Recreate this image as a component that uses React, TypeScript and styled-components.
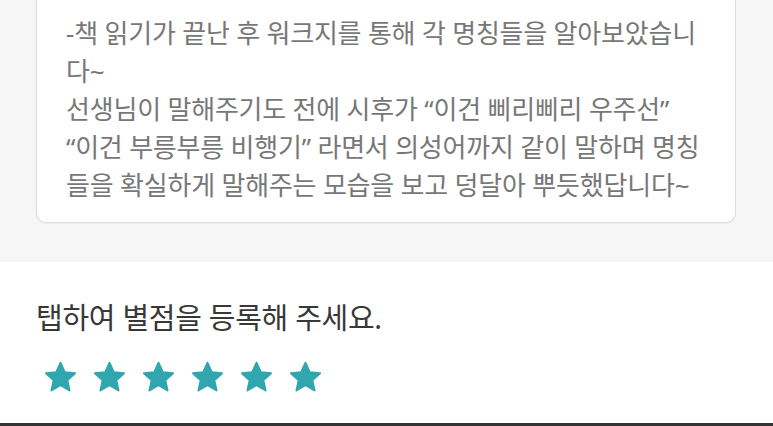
import React from "react";
import styled, { createGlobalStyle } from "styled-components";

const Global = createGlobalStyle`
  html, body { margin: 0; padding: 0; background: #ffffff; }
  body { font-family: "Noto Sans", "Noto Sans CJK KR", sans-serif; }
  * { box-sizing: border-box; }
`;

const Page = styled.div`
  width: 773px;
  height: 426px;
  overflow: hidden;
  display: flex;
  flex-direction: column;
  background: #ffffff;
`;

const GraySection = styled.section`
  background: #f6f6f6;
  padding: 0 37px 39px 36px;
`;

const Card = styled.div`
  background: #ffffff;
  border: 1px solid #dcdcdc;
  border-top: none;
  border-radius: 0 0 10px 10px;
  box-shadow: 0 1px 1px rgba(0, 0, 0, 0.04);
  padding: 14px 10px 18px 29px;
`;

const Body = styled.p`
  margin: 0;
  font-family: "Noto Sans", "Noto Sans CJK KR", sans-serif;
  font-size: 26px;
  line-height: 38px;
  color: #777777;
  white-space: pre;
  letter-spacing: -0.2px;
`;

const RatingSection = styled.section`
  flex: 1;
  background: #ffffff;
  padding: 37px 36px 0 36px;
  display: flex;
  flex-direction: column;
  gap: 25px;
  border-bottom: 3px solid #333333;
`;

const Title = styled.h2`
  margin: 0;
  font-family: "Noto Sans", "Noto Sans CJK KR", sans-serif;
  font-weight: 400;
  font-size: 29px;
  line-height: 37px;
  color: #383838;
  letter-spacing: -0.3px;
`;

const Stars = styled.div`
  display: flex;
  gap: 16px;
  padding-left: 8px;
`;

const StarButton = styled.button`
  border: none;
  background: none;
  padding: 0;
  width: 33px;
  height: 32px;
  cursor: pointer;
  display: flex;
`;

const Star: React.FC = () => (
  <svg width="33" height="32" viewBox="0 0 24 23.3">
    <polygon
      points="12,1.2 15.1,8.1 22.6,8.9 17,14 18.6,21.5 12,17.6 5.4,21.5 7,14 1.4,8.9 8.9,8.1"
      fill="#30a6ae"
      stroke="#30a6ae"
      strokeWidth="1.4"
      strokeLinejoin="round"
    />
  </svg>
);

const text = [
  "-책 읽기가 끝난 후 워크지를 통해 각 명칭들을 알아보았습니",
  "다~",
  "선생님이 말해주기도 전에 시후가 “이건 삐리삐리 우주선”",
  "“이건 부릉부릉 비행기” 라면서 의성어까지 같이 말하며 명칭",
  "들을 확실하게 말해주는 모습을 보고 덩달아 뿌듯했답니다~",
].join("\n");

export default function App() {
  return (
    <Page>
      <Global />
      <GraySection>
        <Card>
          <Body>{text}</Body>
        </Card>
      </GraySection>
      <RatingSection>
        <Title>탭하여 별점을 등록해 주세요.</Title>
        <Stars>
          {[0, 1, 2, 3, 4, 5].map((i) => (
            <StarButton key={i} aria-label={`${i + 1}점`}>
              <Star />
            </StarButton>
          ))}
        </Stars>
      </RatingSection>
    </Page>
  );
}
